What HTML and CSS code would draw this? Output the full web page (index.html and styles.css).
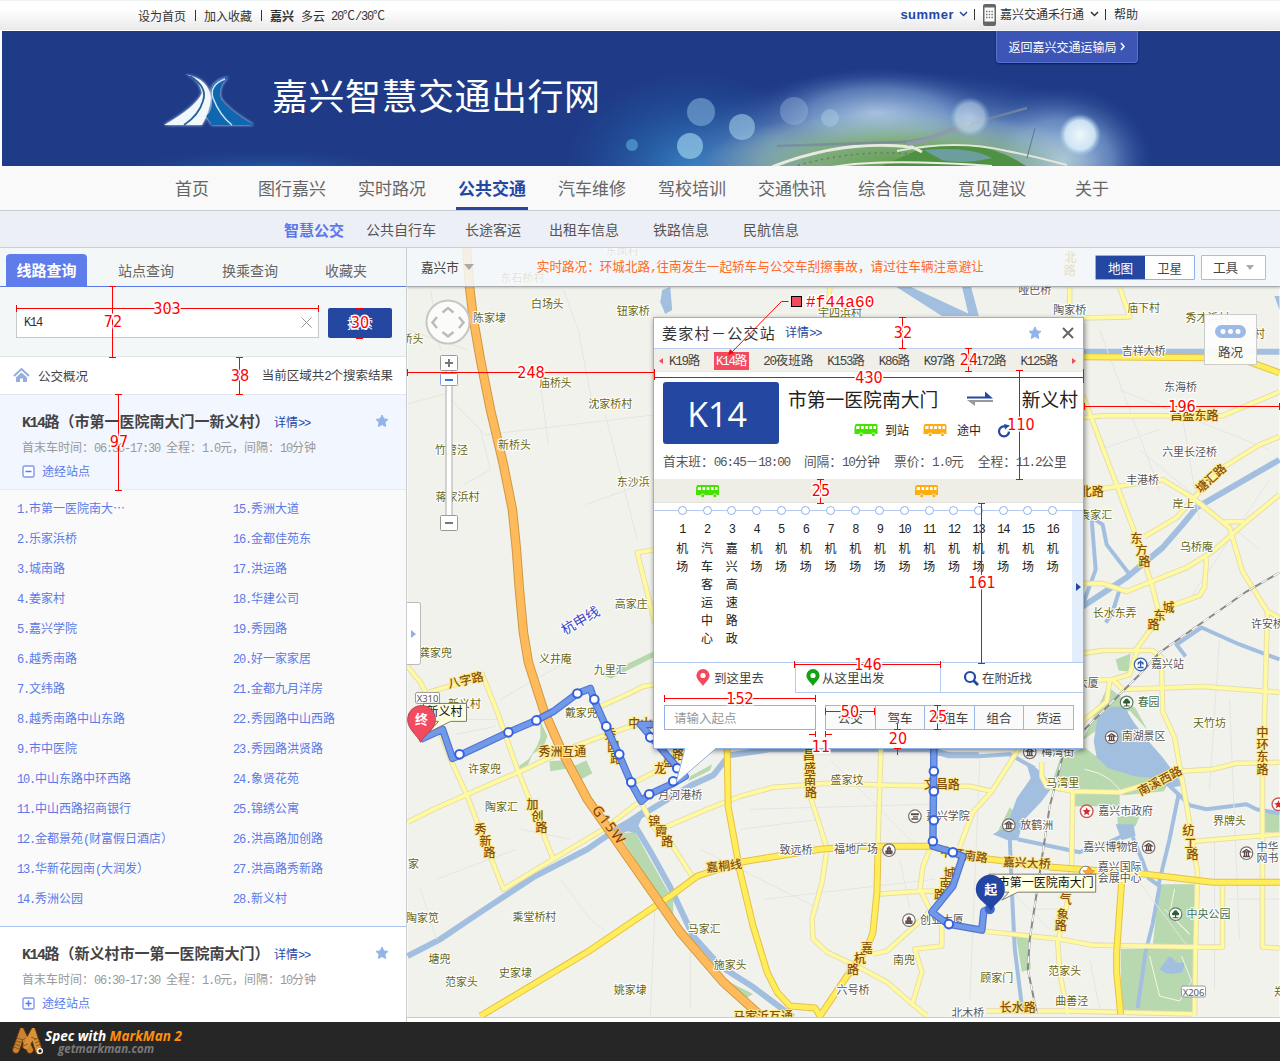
FILE: index.html
```html
<!DOCTYPE html>
<html lang="zh-CN">
<head>
<meta charset="utf-8">
<title>嘉兴智慧交通出行网</title>
<link rel="stylesheet" href="styles.css">
</head>
<body>
<svg class="sprites" width="0" height="0">
  <defs>
    <symbol id="bus" viewBox="0 0 23 14">
      <path fill="currentColor" d="M2 1h19.500q1.500 0 1.500 1.500v8.500h-2a2.200 2.200 0 0 0-4.200 0h-8a2.200 2.200 0 0 0-4.200 0H0V6q0-5 2-5z"/>
      <path fill="#fff" d="M2 3h3v3H1.500zM6.500 3h2.700v3H6.500zM10.700 3h2.700v3h-2.700zM14.900 3h2.700v3h-2.700zM19 3h2.500v3H19z"/>
      <circle fill="currentColor" cx="6.700" cy="11.800" r="1.500"/><circle fill="currentColor" cx="18.900" cy="11.800" r="1.500"/>
    </symbol>
    <symbol id="star" viewBox="0 0 14 14"><path fill="#92b3ea" stroke="#92b3ea" stroke-linejoin="round" d="M7 1l1.800 3.900 4.200.5-3.100 2.900.8 4.200L7 10.500l-3.700 2 .8-4.200L1 5.400l4.200-.5z"/></symbol>
    <symbol id="pin" viewBox="0 0 14 17"><path fill="currentColor" fill-rule="evenodd" d="M7 0a6.600 6.600 0 0 1 6.600 6.600C13.600 10.500 9 14 7 17 5 14 .4 10.500.4 6.600A6.600 6.600 0 0 1 7 0zm0 3.900a2.600 2.600 0 1 0 0 5.200 2.600 2.600 0 0 0 0-5.200z"/></symbol>
    <symbol id="chev" viewBox="0 0 9 6"><path fill="none" stroke="currentColor" stroke-width="1.500" d="M1 1l3.500 3.500L8 1"/></symbol>
    <symbol id="poi" viewBox="-8 -8 16 16"><circle r="6.300" fill="#fff" stroke="#77706c" stroke-width="1.200"/><path fill="none" stroke="#5c4a48" stroke-width="1.300" d="M-3.500 3.300h7M-3.500-1.300h7L0-3.700zM-2-1v4M0-1v4M2-1v4"/></symbol>
    <symbol id="tower" viewBox="-8 -8 16 16"><circle r="6.300" fill="#fff" stroke="#77706c" stroke-width="1.200"/><path fill="none" stroke="#5c4a48" stroke-width="1.300" d="M-3.500 3.300h7M0-4v7M-1.500 3v-5h3v5M-3 3V1h6v2"/></symbol>
    <symbol id="cap" viewBox="-8 -8 16 16"><circle r="6.300" fill="#fff" stroke="#77706c" stroke-width="1.200"/><path fill="#5c4a48" d="M-4-3h8v2h-8zM-2 0h5v1.200h-5zM-3.500 2h7v1.500h-7z"/></symbol>
    <symbol id="tree" viewBox="-8 -8 16 16"><circle r="6.300" fill="#fff" stroke="#5d8060" stroke-width="1.200"/><path fill="#2f5f35" d="M0-4a2.200 2.200 0 0 1 2.200 2A1.700 1.700 0 0 1 3 1H.6v2H3v1h-6V3h2.400V1H-3a1.700 1.700 0 0 1 .8-3A2.200 2.200 0 0 1 0-4z"/></symbol>
    <symbol id="gov" viewBox="-8 -8 16 16"><circle r="6.300" fill="#fff" stroke="#cc5b5b" stroke-width="1.400"/><path fill="#d42c2c" d="M0-4l1.200 2.700 2.900.3-2.200 2 .7 2.900L0 2.400-2.600 3.900l.7-2.900-2.200-2 2.900-.3z"/></symbol>
  </defs>
</svg>

<header class="topbar">
  <div class="topbar-left sim">
    <a>设为首页</a><i class="bar"></i><a>加入收藏</a><i class="bar"></i><b>嘉兴</b><span class="sky">多云</span><span><span class="n">20</span>℃<span class="n">/30</span>℃</span>
  </div>
  <div class="topbar-right sim">
    <b class="user">summer</b><svg class="chev blue"><use href="#chev"/></svg><i class="bar"></i>
    <svg class="phone" viewBox="0 0 13 22"><rect width="13" height="22" rx="2" fill="#666"/><path fill="#fff" d="M1.500 3.500h10v14h-10z"/><path stroke="#777" stroke-width="1.500" stroke-dasharray="1.500 1.200" d="M3 7.500h7M3 10.500h7M3 13.500h7"/></svg>
    <span class="app">嘉兴交通禾行通</span><svg class="chev"><use href="#chev"/></svg><i class="bar"></i><span>帮助</span>
  </div>
</header>

<section class="banner">
  <svg class="scene" viewBox="0 0 1278 135" preserveAspectRatio="none">
    <defs>
      <radialGradient id="glow"><stop offset="0" stop-color="#cfe2f4" stop-opacity=".9"/><stop offset=".55" stop-color="#8fb4dc" stop-opacity=".6"/><stop offset="1" stop-color="#3058a8" stop-opacity="0"/></radialGradient>
      <radialGradient id="teal"><stop offset="0" stop-color="#3c9cd6" stop-opacity=".9"/><stop offset="1" stop-color="#1f5fa8" stop-opacity="0"/></radialGradient>
      <radialGradient id="orb"><stop offset="0" stop-color="#eef8fc"/><stop offset=".7" stop-color="#d6ebf7" stop-opacity=".9"/><stop offset="1" stop-color="#a9cdec" stop-opacity="0"/></radialGradient>
      <radialGradient id="grass"><stop offset="0" stop-color="#5f9c4c"/><stop offset=".45" stop-color="#7fae72" stop-opacity=".85"/><stop offset="1" stop-color="#a9c9c4" stop-opacity="0"/></radialGradient>
    </defs>
    <ellipse cx="265" cy="142" rx="150" ry="22" fill="url(#teal)" opacity=".5"/>
    <ellipse cx="690" cy="140" rx="130" ry="100" fill="url(#teal)" opacity=".85"/>
    <ellipse cx="900" cy="128" rx="250" ry="88" fill="url(#glow)"/>
    <ellipse cx="875" cy="82" rx="120" ry="46" fill="url(#glow)" opacity=".7"/>
    <ellipse cx="1060" cy="130" rx="90" ry="75" fill="url(#glow)" opacity=".9"/>
    <ellipse cx="900" cy="132" rx="200" ry="52" fill="url(#grass)"/>
    <path d="M918 118q60-14 106 17H880z" fill="#4f9143"/><path d="M922 119q45-4 68 8-30 7-50 2z" fill="#6d9e9f"/>
    <g fill="none">
      <path d="M770 136q70-28 140-20l10 5" stroke="#e8e9df" stroke-width="3"/><path d="M790 136q60-18 120-13" stroke="#6a7768" stroke-width="1.500" stroke-dasharray="2 4"/>
      <path d="M775 115l125-4q20 0 50-13l75-21" stroke="#75899f" stroke-width="2.500" opacity=".8"/><path d="M905 113l15-3 48-18" stroke="#8d9bab" stroke-width="4"/>
      <path d="M895 120q60-12 110 0 30 6 60 14" stroke="#e4e6d8" stroke-width="2"/><path d="M830 136q50-9 160-1" stroke="#eceee2" stroke-width="2"/><path d="M1025 127l8-30" stroke="#5d7794"/>
    </g>
    <circle cx="699" cy="81" r="14" fill="#7eadd9" opacity=".6"/><circle cx="740" cy="96" r="13" fill="#a4cde8" opacity=".6"/><circle cx="688" cy="115" r="13" fill="#9fd4ee" opacity=".65"/>
    <circle cx="792" cy="80" r="14" fill="#9eb8dd" opacity=".4"/><circle cx="828" cy="87" r="9" fill="#b3d5e6" opacity=".4"/><circle cx="630" cy="114" r="6" fill="#5297cd" opacity=".8"/>
    <circle cx="968" cy="86" r="20" fill="url(#orb)" opacity=".55"/><circle cx="1078" cy="104" r="21" fill="url(#orb)"/>
  </svg>
  <div class="brand">
    <svg class="logo" viewBox="0 0 92 56">
      <g class="halo"><path fill="#0f67b0" d="M65 4Q44 9 49 25q1 13-6 18l6 9h42Q67 38 58 26q-4-11 7-22z"/>
      <path fill="#f1f8fb" d="M22 1q14 4 17 19Q33 34 1 52h38q8-14 9-27Q46 6 22 1z"/></g>
      <path fill="none" stroke="#27619c" stroke-width="1.800" d="M27 3q18 11 13 25-4 14-19 24"/><path fill="none" stroke="#cbe4f4" stroke-width="1.500" d="M62 6Q46 12 50 25q7 18 19 27"/>
    </svg>
    <h1>嘉兴智慧交通出行网</h1>
  </div>
  <a class="back sim">返回嘉兴交通运输局<svg viewBox="0 0 6 9"><path fill="none" stroke="#fff" stroke-width="1.500" d="M1 1l3 3.500L1 8"/></svg></a>
</section>

<nav class="nav"><a>首页</a><a>图行嘉兴</a><a>实时路况</a><a class="on"><span>公共交通</span></a><a>汽车维修</a><a>驾校培训</a><a>交通快讯</a><a>综合信息</a><a>意见建议</a><a>关于</a></nav>
<nav class="subnav"><a class="on">智慧公交</a><a>公共自行车</a><a>长途客运</a><a>出租车信息</a><a>铁路信息</a><a>民航信息</a></nav>

<main class="main">
  <aside class="side sim">
    <div class="tabs"><a class="on">线路查询</a><a>站点查询</a><a>换乘查询</a><a>收藏夹</a></div>
    <form class="search">
      <div class="field"><span class="n">K14</span><svg viewBox="0 0 11 11"><path stroke="#999" d="M.5.500l10 10M10.500.500l-10 10"/></svg></div>
      <span class="btn">搜索</span>
    </form>
    <div class="summary">
      <svg viewBox="0 0 17 15"><path fill="none" stroke="#92afdf" stroke-width="2" d="M1 8l7.500-7L16 8"/><path fill="#92afdf" d="M8.500 4.500L14 9.500V14h-4v-3.500H7V14H3V9.500z"/></svg>
      <span>公交概况</span><span class="count">当前区域共<span class="n">2</span>个搜索结果</span>
    </div>
    <section class="line open">
      <div class="line-title"><h2><span class="n">K14</span>路（市第一医院南大门一新义村）</h2><a>详情<span class="n">&gt;&gt;</span></a><svg class="star"><use href="#star"/></svg></div>
      <p>首末车时间：<span class="n">06:30-17:30 </span>全程：<span class="n">1.0</span>元，间隔：<span class="n">10</span>分钟</p>
      <div class="via"><svg viewBox="0 0 13 13"><rect x="1" y="1" width="11" height="11" rx="1.500" fill="#fff" stroke="#7f98ee" stroke-width="1.400"/><path stroke="#5b79e8" stroke-width="1.500" d="M3.500 6.500h6"/></svg>途经站点</div>
    </section>
    <div class="stops">
      <ol>
        <li><span class="n">1.</span>市第一医院南大<span class="dots">⋯</span></li><li><span class="n">2.</span>乐家浜桥</li><li><span class="n">3.</span>城南路</li><li><span class="n">4.</span>姜家村</li><li><span class="n">5.</span>嘉兴学院</li><li><span class="n">6.</span>越秀南路</li><li><span class="n">7.</span>文纬路</li><li><span class="n">8.</span>越秀南路中山东路</li><li><span class="n">9.</span>市中医院</li><li><span class="n">10.</span>中山东路中环西路</li><li><span class="n">11.</span>中山西路招商银行</li><li><span class="n">12.</span>金都景苑<span class="n">(</span>财富假日酒店）</li><li><span class="n">13.</span>华新花园南<span class="n">(</span>大润发）</li><li><span class="n">14.</span>秀洲公园</li>
      </ol>
      <ol>
        <li><span class="n">15.</span>秀洲大道</li><li><span class="n">16.</span>金都佳苑东</li><li><span class="n">17.</span>洪运路</li><li><span class="n">18.</span>华建公司</li><li><span class="n">19.</span>秀园路</li><li><span class="n">20.</span>好一家家居</li><li><span class="n">21.</span>金都九月洋房</li><li><span class="n">22.</span>秀园路中山西路</li><li><span class="n">23.</span>秀园路洪贤路</li><li><span class="n">24.</span>象贤花苑</li><li><span class="n">25.</span>锦绣公寓</li><li><span class="n">26.</span>洪高路加创路</li><li><span class="n">27.</span>洪高路秀新路</li><li><span class="n">28.</span>新义村</li>
      </ol>
    </div>
    <section class="line">
      <div class="line-title"><h2><span class="n">K14</span>路（新义村市一第一医院南大门）</h2><a>详情<span class="n">&gt;&gt;</span></a><svg class="star"><use href="#star"/></svg></div>
      <p>首末车时间：<span class="n">06:30-17:30 </span>全程：<span class="n">1.0</span>元，间隔：<span class="n">10</span>分钟</p>
      <div class="via"><svg viewBox="0 0 13 13"><rect x="1" y="1" width="11" height="11" rx="1.500" fill="#fff" stroke="#7f98ee" stroke-width="1.400"/><path stroke="#5b79e8" stroke-width="1.500" d="M3.500 6.500h6M6.500 3.500v6"/></svg>途经站点</div>
    </section>
  </aside>

  <div class="map">
    <svg class="canvas" width="873" height="770" viewBox="407 248 873 770">
      <rect x="407" y="248" width="873" height="770" fill="#f2f2ed"/>
      <g fill="#b8d8b0">
        <path d="M540 722l7 15-4 11-11 7-6 14-12 1 14-10 8-12 4-10zM549 762l15-1 5 8-19 3zM569 769l17-8 6 13-13 7zM618 834l17-1 14 26 24 42v18l-22-34zM603 676l50-24v6l-42 21zM690 777l22-12-2 6-22 11zM723 980l30 15-10 6-20-14z"/>
        <path d="M1060 760l25-12 10 8 25 10 52 14-8 12-40 4-66-4-4-14zM1075 790h45v17h-45zM1118 817h22l-4 10h-18zM1160 885h35v60l-42 2zM1121 950h73v64h-72zM1016 935l13 5 2 30-9 3zM1010 808l8 8-8 18h-13zM1265 813h15v20h-15zM1116 660l15-6-2 18-10-1zM1108 687l28 22 12 22-18-20-22 12-25 18z"/>
      </g>
      <g fill="#a3bfe0">
        <path d="M662 290l8-3 2 23-7 4-5-12zM895 286h14l65 30h-32zM962 286h9l8 30h-10z"/>
        <path d="M1094 742l4-24 14-11 13 1 10 16 14 18 14 16 21 28-10 2-17-9-22-2-26-8-12-11zM1026 762l12 8 16 16-12 16-18 19-6 20h-10l-15-6 14-8 10-28 14-20zM1116 825h18l2 12-14 4z"/>
        <path d="M1160 970l10-13 8 7 8-1-3 10-10 2-8-1zM1275 296h5v14zM615 828l30-20-4 12-6 14-8-2-18 8z"/>
      </g>
      <g fill="none" stroke="#a3bfe0" stroke-linejoin="round">
        <path stroke-width="6" d="M407 957l33-17 43-29 50-33 54-28 32-22 22-12 30-18 20-12 22-10 16-20 40-6h160l20 6h30M632 822l18 30 20 36 23 49 27 30 33 21 40 30M1083 352h197M1280 460l-83 48-14 17-20 23-36 30-44 29"/>
        <path stroke-width="4" d="M1083 512l20 13 4 20 23 30M1092 520l4 50-14 38M1120 590l-8 25-6 8M1186 657l-9-12 25-17 38 17 40 15M930 754l50 3 30-2 25 14M1018 840l62 13 27-9 15-7M1133 838l10 24 6 17 11 8-7 38-7 28-8 56M1179 795l-9 45-11 45M1010 838l2 52 3 60 8 64M1163 780l18 17 9 9 17 4 40-5 10 5 23 4"/>
      </g>
      <g fill="none" stroke="#e4e4e2">
        <path d="M407 404l38-10 35 36 10 40-27 15M455 405l30 30 170-20 112-25M563 290l15 40 15 80M605 415l18 70 14 55M585 505l65-23M540 385l8 60M407 330l60 20M436 880l80-30M420 890l16 50M500 700l70-40M560 880l30 40 15 12M655 900l-5 120M740 830l80-10M765 900l170-20M690 950v60M750 810l180-5M830 760l90 90M900 860l10 50M980 760l-10 240M1090 960l10 50M1100 330l60 160M1120 390l150 60M1180 400l20 120M1140 450l120 100M1220 640l-10 150M1100 450l60-20M1230 700l10 240M1270 480l-80 120M1130 870l60 80M1300 900h-70M1215 840v150M990 870l60 60M1035 890h30M1035 910h30M700 850l120 60M450 720h50M455 735l40-8M520 830l50 10M430 290l10 60"/>
      </g>
      <defs>
        <g id="minor" fill="none" stroke-linejoin="round">
          <path d="M407 823l26-13 34-15 53-23 47-22 26-10 37-13 25-5M427 693l53-15M481 673l16 40 20 57 20 50 16 40M407 667l13 16 5 10 25 67 17 37 16 43 20 50 50-30 50-30 37-28 15 28 15 13 22 34M600 707l27-12 16-8 12-2M630 785l30-15 20-14M655 550l-18 3 18 72"/>
          <path d="M660 830l47-20 33-13 33-9 54-4 66 2 77 1 22 5M807 748l3 49 10 30 7 23-5 33-10 37 1 20 14 13 30 14 30 16 23 20 17 14M877 895l43-3h23M930 850l-7 17-3 23 10 20 12 17v20l-27 3 7 23-9 30M873 955l14-3 33-30 12-12M878 847l3-100M1020 748l-28 44-19 21-13 34"/>
          <path d="M1042 763v14l5 10 26 5 47 1 27-8 33-13 33-2 24-6 43-1M1073 792l-1 75-4 35-10 41 2 30 8 42M983 932l77 8 33 6 100 2h30v-61M1175 738l7 39 8 46 8 50-2 74-1 70M1195 842l85-7M1263 740v208l17 1M987 1012h80l126 3"/>
          <path d="M1120 287l10 30-47 1M1070 287v30M830 286l-3 31M1083 418l20-2h120l57-24M1083 395l34 90 20 53 15 47 8 30M1083 492l80-12 30 18 37 30 13 44 25 40-3 106v22M1145 537l32-19 23-26 23-24 37-23 20-8M1083 584h20l24 8 60-24 26-16 34-30 33-27M1207 558l-2 30-5 8-33 12-32 44M1083 654l20-3h50l9 7 1 54 12 26M1083 681l30-1 10 10 80-3 77 6M1110 682l-3 20-24 20M1137 652l-7 23-17 5M1268 612l12 6M1225 522h20"/>
        </g>
        <g id="major" fill="none" stroke-linejoin="round">
          <path d="M480 1017l107-64 83-56 27-20 43-14 80-13 40-3h73l30 10 27 3 63 8 93 7 67 8h70M727 748l1 59 12 66 13 54 14 46 10 20 13 14 25 2 5 8 27-40 20-27 6-17 4-40 1-43M1122 883l-5 70v20l4 42M1083 357l124 1 43 4 30 11"/>
        </g>
        <path id="highway" fill="none" d="M466 248l3 38 4 34 7 40 10 50 13 55 9 45 4 40 3 40 4 43 5 30 15 47 19 43 25 47 26 37 67 96 43 50 40 36"/>
        <path id="route" fill="none" stroke-linejoin="round" d="M420 740l22-10 10 29 7-3 49-23 28-12 17-9 24-18 13-5 4 12 12 27 13 28 12 28 10 18 8-7 24-11 12-7-8-9-37-43h20M934 748l-1 99 20 6 10 4-10 30-21 26 16 12 34 6 2-19 7-3"/>
      </defs>
      <use href="#minor" stroke="#e3dcb2" stroke-width="5.500"/><use href="#minor" stroke="#fff9a0" stroke-width="3.700"/>
      <use href="#major" stroke="#e5c04a" stroke-width="7"/><use href="#major" stroke="#ffed5a" stroke-width="5"/>
      <use href="#highway" stroke="#cf9840" stroke-width="9.500"/><use href="#highway" stroke="#ffbb5b" stroke-width="7.500"/>
      <g fill="none"><path stroke="#888" stroke-width="2" d="M1280 573l-33 19-87 61-20 22-57 57-20 25-13 50-20 133-2 30 9 44"/><path stroke="#fff" stroke-width="1.300" stroke-dasharray="7 7" d="M1280 573l-33 19-87 61-20 22-57 57-20 25-13 50-20 133-2 30 9 44"/>
      <path stroke="#f5f5e8" d="M1085 770q30 5 40 30M1175 890l-5 25 20 20M1165 910l25 25M1150 957l10 40 20 5 12-20-10-25"/></g>

      <g class="lbl village">
        <text x="547" y="308">白场头</text><text x="633" y="315">钮家桥</text><text x="489" y="322">陈家埭</text><text x="412" y="343">桥头</text><text x="555" y="387">庙桥头</text><text x="610" y="408">沈家桥村</text><text x="514" y="449">新桥头</text><text x="451" y="454">竹管泾</text><text x="457" y="501">蒋家浜村</text><text x="633" y="486">东沙浜</text><text x="631" y="608">高家庄</text><text x="435" y="658">龚家兜</text><text x="555" y="664">义井庵</text><text x="610" y="675">九里汇</text><text x="464" y="709">新义村</text><text x="581" y="718">戴家兜</text><text x="484" y="774">许家兜</text><text x="501" y="812">陶家汇</text><text x="413" y="869">家</text><text x="422" y="923">陶家笕</text><text x="534" y="922">乘堂桥村</text><text x="439" y="964">塘兜</text><text x="461" y="987">范家头</text><text x="515" y="978">史家埭</text><text x="630" y="995">姚家埭</text>
        <text x="847" y="785">盛家坟</text><text x="704" y="934">马家汇</text><text x="730" y="970">施家头</text><text x="904" y="965">南兜</text><text x="1063" y="788">马湾里</text><text x="1230" y="826">界牌头</text><text x="997" y="983">顾家门</text><text x="1065" y="976">范家头</text><text x="1072" y="1006">曲善泾</text><text x="1280" y="997">郑</text><text x="1144" y="312">庙下村</text><text x="1208" y="322">秀才浜村</text><text x="1260" y="338">村</text><text x="1184" y="508">岸上</text><text x="1096" y="519">袁家汇</text><text x="1197" y="551">乌桥庵</text><text x="1115" y="617">长水东弄</text><text x="1210" y="728">天竹坊</text><text x="840" y="317">宇四浜村</text><text x="522" y="282">东石桥村</text><text x="622" y="255">东凤村</text>
      </g>
      <g class="lbl place">
        <text x="680" y="800">月河港桥</text><text x="948" y="821">嘉兴学院</text><text x="796" y="855">致远桥</text><text x="856" y="854">福地广场</text><text x="942" y="925">创业大厦</text><text x="853" y="995">六号桥</text><text x="968" y="1018">北木桥</text><text x="1058" y="757">梅湾街</text><text x="1126" y="816">嘉兴市政府</text><text x="1037" y="830">放鹤洲</text><text x="1111" y="852">嘉兴博物馆</text><text x="1268" y="852">中华</text><text x="1268" y="863">网书</text><text x="1120" y="872">嘉兴国际</text><text x="1120" y="883">会展中心</text><text class="park" x="1209" y="919">中央公园</text><text x="1035" y="294">哑巴桥</text><text x="1070" y="314">陶家桥</text><text x="1144" y="355">吉祥大桥</text><text x="1181" y="391">东海桥</text><text x="1190" y="456">六里长泾桥</text><text x="1143" y="484">丰港桥</text><text x="1268" y="629">许安桥</text><text x="1168" y="669">嘉兴站</text><text x="1088" y="688">大厦</text><text class="park" x="1149" y="707">春园</text><text x="1144" y="741">南湖景区</text>
      </g>
      <g class="lbl road">
        <text x="562" y="757">秀洲互通</text><text x="465" y="685" transform="rotate(-13 465 680)">八字路</text><text x="532 537 541" y="810 822 833">加创路</text><text x="480 485 489" y="835 847 858">秀新路</text><text x="654 661 667" y="827 837 847">锦霞路</text><text x="660 669 678" y="774 767 760">龙盛路</text><text x="640" y="729">中山</text><text x="610 613 616" y="740 752 764">秀园路</text><text x="809 810 810 811" y="761 774 786 798">昌盛南路</text><text x="942" y="790">文昌路</text><text x="724" y="871" transform="rotate(-7 724 867)">嘉桐线</text><text x="964" y="860" transform="rotate(8 964 857)">中环南路</text><text x="950 946 940" y="879 889 900">城南路</text><text x="867 860 853" y="954 964 975">嘉杭路</text><text x="763" y="1022">马家浜互通</text><text x="1160" y="786" transform="rotate(-28 1160 781)">南溪西路</text><text x="1263 1263 1263 1263" y="738 750 762 775">中环东路</text><text x="1189 1191 1193" y="836 849 860">纺工路</text><text x="1027" y="868" transform="rotate(3 1027 864)">嘉兴大桥</text><text x="1066 1063 1061" y="905 920 931">气象路</text><text x="1018" y="1013">长水路</text><text x="1195" y="420">昌盛东路</text><text x="1211" y="483" transform="rotate(-42 1211 478)">塘汇路</text><text x="1092" y="496">北路</text><text x="1137 1142 1145" y="543 555 566">东方路</text><text x="1169 1160 1154" y="612 620 630">城东路</text><text x="1071 1070" y="262 275">北路</text>
      </g>
      <g class="lbl g15"><text transform="translate(591 811) rotate(52)" text-anchor="start" textLength="44">G15W</text></g>
      <text class="lbl water" x="580" y="626" transform="rotate(-30 580 621)">杭申线</text>
      <g class="shield"><rect x="415" y="693" width="24" height="11" rx="1.500"/><rect x="1182" y="987" width="24" height="11" rx="1.500"/><text x="427" y="702.500">X310</text><text x="1194" y="996.500">X206</text></g>
      <use href="#poi" x="1022" y="745" width="16" height="16"/><use href="#poi" x="1001" y="818" width="16" height="16"/><use href="#poi" x="1141" y="840" width="16" height="16"/><use href="#poi" x="1239" y="846" width="16" height="16"/><use href="#poi" x="1104" y="730" width="16" height="16"/><use href="#cap" x="907" y="809" width="16" height="16"/>
      <use href="#tower" x="881" y="843" width="16" height="16"/><use href="#tower" x="901" y="913" width="16" height="16"/>
      <use href="#tree" x="1168" y="907" width="16" height="16"/><use href="#tree" x="1119" y="695" width="16" height="16"/>
      <use href="#gov" x="1079" y="804" width="16" height="16"/><use href="#gov" x="1271" y="797" width="16" height="16"/>
      <circle cx="1141" cy="665" r="6.300" fill="#fff" stroke="#3c63a8" stroke-width="1.300"/><path d="M1138 668h6M1141 661v6M1138.500 665a2.500 2.500 0 1 1 5 0" fill="none" stroke="#2d5ba8" stroke-width="1.400"/>
      <circle cx="1086" cy="873" r="6" fill="#fff" stroke="#777"/><path fill="#ffa42d" stroke="#e07d13" stroke-width=".6" d="M1089 867l1.700 4.200 4.300.3-3.300 2.800 1 4.300-3.700-2.300-3.700 2.300 1-4.300-3.300-2.800 4.300-.3z"/>

      <use href="#route" stroke="#3f69d8" stroke-width="7.500" stroke-opacity=".9"/><use href="#route" stroke="#7298e8" stroke-width="5"/>
      <g fill="#fff" stroke="#3360dc" stroke-width="2"><circle cx="459" cy="755" r="4.300"/><circle cx="508" cy="733" r="4.300"/><circle cx="536" cy="721" r="4.300"/><circle cx="577" cy="694" r="4.300"/><circle cx="594" cy="700" r="4.300"/><circle cx="606" cy="727" r="4.300"/><circle cx="619" cy="755" r="4.300"/><circle cx="631" cy="783" r="4.300"/><circle cx="649" cy="795" r="4.300"/><circle cx="673" cy="782" r="4.300"/><circle cx="677" cy="769" r="4.300"/><circle cx="650" cy="738" r="4.300"/><circle cx="934" cy="772" r="4.300"/><circle cx="934" cy="792" r="4.300"/><circle cx="934" cy="821" r="4.300"/><circle cx="933" cy="842" r="4.300"/><circle cx="953" cy="853" r="4.300"/><circle cx="949" cy="925" r="4.300"/></g>
      <g class="tip"><path d="M423 704h43v18h-16l-22 11 10-11h-15z"/><path d="M989 875h107v18h-78l-16 8 7-8h-20z"/><text x="444" y="717">新义村</text><text x="1046" y="888">市第一医院南大门</text></g>
      <g class="marker"><path fill="#f44a60" stroke="#a33a48" stroke-width=".8" d="M420 743c-3-7-13-13-13-23a14 14 0 0 1 28 0c0 10-12 16-15 23z"/><circle cx="990" cy="910" r="5" fill="#3867cf"/><path fill="#2345a3" d="M991 912c-3-8-15-11-15-22a14.500 14.500 0 0 1 29 0c0 11-11 14-14 22z"/><text x="421" y="725">终</text><text x="991" y="895">起</text></g>
    </svg>

    <div class="toolbar sim">
      <span class="city">嘉兴市</span><i class="tri"></i>
      <span class="notice">实时路况：环城北路<span class="n">,</span>往南发生一起轿车与公交车刮擦事故，请过往车辆注意避让</span>
      <div class="switch"><b>地图</b><span>卫星</span></div>
      <div class="tools">工具<i class="tri"></i></div>
    </div>

    <svg class="pan" viewBox="0 0 46 46"><circle cx="23" cy="23" r="21.500" fill="#fbfbfa" stroke="#c6c6c6" stroke-width="2"/><path fill="none" stroke="#bbb" stroke-width="2.500" d="M17.500 13.500L23 9l5.500 4.500M17.500 33L23 37.500l5.500-4.500M12 18l-4.500 5.500L12 29M34 18l4.500 5.500L34 29"/></svg>
    <svg class="zoom" viewBox="0 0 20 178"><rect x="7" y="10" width="6" height="158" fill="#fff" stroke="#aaa"/><rect x="1.500" y="1.500" width="17" height="15" rx="1" fill="#fff" stroke="#999"/><rect x="1.500" y="19.500" width="17" height="12" rx="1" fill="#fff" stroke="#7c9fe0"/><rect x="1.500" y="161.500" width="17" height="15" rx="1" fill="#fff" stroke="#999"/><path stroke="#777" stroke-width="2" d="M6 9h8M10 5v8M6 169h8"/><path stroke="#3b7be0" stroke-width="2" d="M6 26h8"/></svg>
    <div class="collapse"><i></i></div>
    <div class="traffic sim"><svg viewBox="0 0 31 13"><rect width="31" height="13" rx="6.500" fill="#9db9e8"/><g fill="#fff"><circle cx="8" cy="6.500" r="2.500"/><circle cx="15.500" cy="6.500" r="2.500"/><circle cx="23" cy="6.500" r="2.500"/></g></svg>路况</div>

    <svg class="tail" viewBox="0 0 50 40"><path fill="#fff" d="M13 1L4 37 45 1z"/><path fill="none" stroke="#8fb1e6" d="M13 2.500L4 37 44 2.500"/></svg>
    <article class="popup sim">
      <header><h3>姜家村－公交站</h3><a>详情<span class="n">&gt;&gt;</span></a><svg class="star"><use href="#star"/></svg><svg class="close" viewBox="0 0 12 12"><path stroke="#666" stroke-width="2" d="M1 1l10 10M11 1L1 11"/></svg></header>
      <div class="routes"><i class="prev"></i><a><span class="n">K19</span>路</a><a class="on"><span class="n">K14</span>路</a><a><span class="n">20</span>夜班路</a><a><span class="n">K153</span>路</a><a><span class="n">K86</span>路</a><a><span class="n">K97</span>路</a><a><span class="n">K172</span>路</a><a><span class="n">K125</span>路</a><i class="next"></i></div>
      <div class="info">
        <div class="info-top">
          <div class="badge">K14</div>
          <div class="info-main">
            <div class="ends"><span>市第一医院南大门</span><svg viewBox="0 0 28 16"><path fill="#2447a6" d="M1 5.500h18V.500l8 7H1z"/><path fill="#999" d="M27 9H1l8 6v-4h18z"/></svg><span>新义村</span></div>
            <div class="legend"><svg class="green"><use href="#bus"/></svg><span>到站</span><svg class="amber"><use href="#bus"/></svg><span>途中</span><svg class="refresh" viewBox="0 0 14 14"><path fill="none" stroke="#2447a6" stroke-width="2.200" d="M8 2.500a5 5 0 1 0 4 4.500"/><path fill="#2447a6" d="M7 0l6 1.500-5 4z"/></svg></div>
          </div>
        </div>
        <div class="facts"><span>首末班：<span class="n">06:45</span>－<span class="n">18:00</span></span><span>间隔：<span class="n">10</span>分钟</span><span>票价：<span class="n">1.0</span>元</span><span>全程：<span class="n">11.2</span>公里</span></div>
      </div>
      <div class="track"><svg class="green"><use href="#bus"/></svg><svg class="amber"><use href="#bus"/></svg></div>
      <div class="stations">
        <ul><li><i></i><span class="n">1</span><b>机场</b></li><li><i></i><span class="n">2</span><b>汽车客运中心</b></li><li><i></i><span class="n">3</span><b>嘉兴高速路政</b></li><li><i></i><span class="n">4</span><b>机场</b></li><li><i></i><span class="n">5</span><b>机场</b></li><li><i></i><span class="n">6</span><b>机场</b></li><li><i></i><span class="n">7</span><b>机场</b></li><li><i></i><span class="n">8</span><b>机场</b></li><li><i></i><span class="n">9</span><b>机场</b></li><li><i></i><span class="n">10</span><b>机场</b></li><li><i></i><span class="n">11</span><b>机场</b></li><li><i></i><span class="n">12</span><b>机场</b></li><li><i></i><span class="n">13</span><b>机场</b></li><li><i></i><span class="n">14</span><b>机场</b></li><li><i></i><span class="n">15</span><b>机场</b></li><li><i></i><span class="n">16</span><b>机场</b></li></ul>
        <div class="more"><i></i></div>
      </div>
      <div class="actions"><a><svg class="pin red"><use href="#pin"/></svg>到这里去</a><a class="on"><svg class="pin grn"><use href="#pin"/></svg>从这里出发</a><a class="near"><svg class="lens" viewBox="0 0 16 16"><circle cx="7" cy="7" r="5" fill="none" stroke="#2447a6" stroke-width="2.200"/><path stroke="#2447a6" stroke-width="2.800" d="M10.500 10.500L15 15"/></svg>在附近找</a></div>
      <div class="query"><div class="from">请输入起点</div><div class="modes"><span>公交</span><span>驾车</span><span>出租车</span><span>组合</span><span>货运</span></div></div>
    </article>
  </div>
</main>

<footer class="foot">
  <svg viewBox="0 0 34 28"><g fill="none" stroke-linecap="round"><path stroke="#5c3210" stroke-width="8" d="M5 22L11 5l8 17M15 18l7-13 6 18"/><path stroke="#c98232" stroke-width="6" d="M5 22L11 5l8 17"/><path stroke="#d8923a" stroke-width="6" d="M15 18l7-13 6 18"/></g><path stroke="#8f5417" stroke-width="1" d="M3 19l5 2M4 16l5 2M5 13l6 2M6 10l6 2M14 10l-4 4M17 16l-5 2M20 9l5 2M23 12l4-2M24 15l5-2M25 18l5-2"/><circle cx="29" cy="23" r="3" fill="#fff"/><circle cx="29" cy="23" r="1.700" fill="#222"/></svg>
  <div><p class="spec">Spec with <em>MarkMan 2</em></p><p class="site">getmarkman.com</p></div>
</footer>

<svg class="marks" width="1280" height="1061" viewBox="0 0 1280 1061">
  <g fill="none" stroke="#f00" shape-rendering="crispEdges">
    <path d="M16.500 308.500h302M16.500 305v7M318.500 305v7M112.500 287v70M109 286.500h7M109 357.500h7M359.500 308v30M356 308.500h7M356 338.500h7M239.500 357v38M236 357.500h7M236 394.500h7M118.500 394v96M115 394.500h7M115 490.500h7"/>
    <path d="M407.500 372.500h246M407.500 369v7M654.500 369v11M654.500 377.500h429M1083.500 369v14M902.500 317v32M899 317.500h7M899 348.500h7M968.500 348v24M965 348.500h7M965 371.500h7"/>
    <path d="M1019.500 371v108M1016 370.500h7M1016 479.500h7M820.500 479v25M817 479.500h7M817 503.500h7M981.500 503v160M978 503.500h7M978 663.500h7M1084.500 406.500h195M1084.500 403v7M1279.500 403v7"/>
    <path d="M794.500 664.500h146M794.500 661v7M940.500 661v7M664.500 698.500h151M664.500 695v7M815.500 695v7M825.500 711.500h49M825.500 708v7M874.500 708v7M937.500 705v24M934 705.500h7M934 729.500h7M897.500 724v6M894 729.500h7M897.500 748v7M894 748.500h7M815.500 731v6M809 734.500h6M825.500 731v6M825 734.500h7"/>
  </g>
  <path fill="none" stroke="#f00" d="M788.500 301.500h-7L731 353"/><path fill="#f00" d="M728 355l2-6 4 4z"/><rect x="791.500" y="296.500" width="10" height="10" fill="#f44a60" stroke="#000"/>
  <text class="hex" x="806" y="307">#f44a60</text>
  <g class="num"><text x="167" y="314">303</text><text x="113" y="327">72</text><text x="360" y="328">30</text><text x="240" y="381">38</text><text x="119" y="447">97</text><text x="531" y="378">248</text><text x="869" y="383">430</text><text x="903" y="338">32</text><text x="969" y="365">24</text><text x="1021" y="430">110</text><text x="821" y="496">25</text><text x="982" y="588">161</text><text x="1182" y="412">196</text><text x="868" y="670">146</text><text x="740" y="704">152</text><text x="850" y="717">50</text><text x="938" y="722">25</text><text x="898" y="744">20</text><text x="821" y="752">11</text></g>
</svg>
</body>
</html>
```
FILE: styles.css
```css
* { box-sizing: border-box; }
body { margin: 0; width: 1280px; height: 1061px; overflow: hidden; position: relative; background: #fff; color: #444; font: 12px/18px "Noto Sans CJK SC", sans-serif; display: flex; flex-direction: column; }
h1, h2, h3, p, ol, ul { margin: 0; padding: 0; font-weight: 400; list-style: none; }
i { font-style: normal; }
.sprites { position: absolute; }
.sim { font-family: "Noto Sans CJK SC", sans-serif; font-size: 12px; }
/* half-width figures, so that two of them fill one ideograph */
.n { font-family: "Liberation Mono", monospace; letter-spacing: -.1em; white-space: pre; }
.star { width: 14px; height: 14px; }
.green { color: #45e100; }
.amber { color: #ffad0a; }

.topbar { height: 31px; flex: none; display: flex; justify-content: space-between; padding: 0 141px 0 138px; border-top: 1px solid #edf4f2; background: linear-gradient(#fdfdfd, #fff 30%, #e9e9e9); border-bottom: 1px solid #fff; color: #333; }
.topbar-left, .topbar-right { display: flex; align-items: center; }
.bar { width: 1px; height: 11px; background: #333; margin: 0 8px 0 9px; }
.sky { margin: 0 6px 0 7px; }
.topbar-right { padding: 0 1px 3px 0; }
.topbar-right .bar { margin: 0 8px 0 6px; }
.user { font: bold 13px "Liberation Sans", sans-serif; color: #2447a6; letter-spacing: .5px; margin-right: 5px; }
.chev { width: 9px; height: 6px; }
.chev.blue { color: #2447a6; }
.phone { width: 13px; height: 22px; margin-right: 4px; position: relative; top: 1px; }
.app { margin-right: 6px; }

.banner { height: 135px; flex: none; margin-left: 2px; background: #1f3b87; position: relative; display: flex; align-items: flex-start; }
.scene { position: absolute; left: 0; top: 0; width: 1278px; height: 135px; }
.brand { position: relative; display: flex; align-items: flex-start; gap: 18px; padding: 37px 0 0 161px; }
.logo { width: 92px; height: 56px; margin-top: 5px; }
.halo { filter: drop-shadow(0 0 1.500px #dceaff); }
.brand h1 { color: #fff; font-size: 36px; line-height: 54px; letter-spacing: .5px; font-weight: 400; margin-top: -1px; margin-left: -1px; }
.back { position: relative; margin: 0 142px 0 auto; width: 142px; height: 32px; border: 1px solid #5873cf; border-top: 0; border-radius: 0 0 4px 4px; background: #3d56b5; box-shadow: 0 1px 2px #0b1a4c; color: #fff; display: flex; align-items: center; justify-content: center; gap: 3px; }
.back svg { width: 6px; height: 9px; }

.nav { height: 45px; flex: none; display: flex; padding-left: 142px; background: #f9f9f9; border-bottom: 1px solid #c9ccd3; color: #666; font-size: 17px; line-height: 44px; }
.nav a { width: 100px; text-align: center; }
.nav .on { color: #2447a6; font-weight: 700; }
.nav .on span { display: inline-block; width: 72px; height: 44px; border-bottom: 3px solid #2447a6; }
.subnav { height: 37px; flex: none; display: flex; padding-left: 284px; background: #edeff6; border-bottom: 1px solid #cbced5; color: #555; font-size: 14px; line-height: 37px; }
.subnav a { margin-right: 34px; }
.subnav .on { color: #5b79e8; font-weight: 700; font-size: 15px; margin-right: 22px; }
.subnav a:nth-child(2) { margin-right: 29px; }
.subnav a:nth-child(3) { margin-right: 28px; }

.main { flex: 1; display: flex; min-height: 0; }
.side { width: 407px; flex: none; border-right: 1px solid #c9ccd0; background: #fff; display: flex; flex-direction: column; overflow: hidden; }
.tabs { height: 39px; flex: none; display: flex; align-items: flex-end; background: #f3f7f7; border-bottom: 1px solid #5b79e8; padding-left: 6px; font-size: 14px; line-height: 32px; color: #666; }
.tabs a { width: 104px; text-align: center; }
.tabs .on { width: 81px; background: #5f7ceb; color: #fff; font-weight: 700; font-size: 15px; border-radius: 4px 4px 0 0; margin-right: 7px; }
.tabs a:last-child { width: 88px; }
.search { height: 70px; flex: none; display: flex; align-items: center; gap: 9px; padding: 2px 0 0 16px; background: #f3f7f7; border-bottom: 1px solid #e2e8ea; }
.field { width: 303px; height: 30px; border: 1px solid #c6c8ca; background: #fff; display: flex; align-items: center; justify-content: space-between; padding: 0 6px 0 7px; color: #333; }
.field svg { width: 11px; height: 11px; }
.btn { width: 64px; height: 30px; border-radius: 2px; background: #2447a1; color: #fff; text-align: center; font-size: 13px; line-height: 30px; }
.summary { height: 38px; flex: none; display: flex; align-items: center; padding: 0 13px; border-bottom: 1px solid #e0e8ee; font-size: 12.500px; }
.summary svg { width: 17px; height: 15px; margin-right: 8px; }
.count { margin-left: auto; }
.line { height: 96px; flex: none; padding: 16px 17px 0 22px; }
.line.open { height: 95px; background: #f2f6fe; border-bottom: 1px solid #e6ecf2; }
.line-title { display: flex; align-items: center; height: 23px; }
.line-title h2 { width: 252px; font-size: 15px; font-weight: 700; white-space: nowrap; }
.line-title a, .popup header a { color: #2447a6; white-space: nowrap; }
.line-title .star { margin: -4px 0 0 auto; }
.line p { color: #999; line-height: 26px; height: 27px; }
.via { display: flex; align-items: center; gap: 7px; height: 20px; color: #5b79e8; }
.via svg { width: 13px; height: 13px; }
.stops { height: 437px; flex: none; display: flex; padding: 3px 0 0 17px; background: #fafafa; border-bottom: 1px solid #abc3f0; color: #5b79e8; line-height: 30px; }
.stops ol { width: 216px; flex: none; }
.stops ol + ol { width: 170px; }
.stops li { height: 30px; }

.map { flex: 1; position: relative; overflow: hidden; background: #fff; }
.canvas { display: block; border-bottom: 1px solid #ccc; height: 770px; }
.lbl { font-size: 11px; text-anchor: middle; paint-order: stroke; stroke: #fff; stroke-width: 2px; stroke-linejoin: round; }
.village { fill: #666610; }
.place { fill: #555; }
.park { fill: #47714a; }
.road { fill: #84500c; stroke: #ffeb8c; font-size: 12px; font-weight: 500; }
.g15 { fill: #74430a; stroke: #ffbb5b; font: 14px "Noto Sans", sans-serif; }
.water { fill: #3b45cc; font-size: 14px; }
.shield rect { fill: #fff; stroke: #999; }
.shield text { font: 9.500px "Noto Sans", sans-serif; text-anchor: middle; fill: #555; }
.tip path { fill: #ffffe1; stroke: #777; }
.tip text { font-size: 12px; fill: #111; text-anchor: middle; }
.marker text { font-size: 13px; font-weight: 700; fill: #fff; text-anchor: middle; }

.toolbar { position: absolute; left: 0; top: 0; width: 873px; height: 39px; display: flex; align-items: center; padding: 0 14px; background: rgba(244, 248, 250, .86); border-bottom: 1px solid #a9abad; box-shadow: 0 1px 2px rgba(0, 0, 0, .2); font-size: 12.600px; }
.tri { border: 5px solid transparent; border-top: 6px solid #aaa; border-bottom: 0; }
.city { margin-right: 5px; }
.notice { margin-left: 63px; color: #ff6a2a; white-space: nowrap; }
.switch { display: flex; margin-left: auto; margin-right: 6px; width: 100px; height: 25px; border: 1px solid #8fb0e8; border-radius: 1px; background: #fff; line-height: 23px; text-align: center; }
.switch > * { flex: 1; font-weight: 400; }
.switch b { background: #2447a1; color: #fff; }
.tools { display: flex; align-items: center; justify-content: center; gap: 8px; width: 65px; height: 25px; border: 1px solid #a5bfe8; border-radius: 1px; background: #fff; }
.tools .tri { border-width: 5px 4px 0; }
.pan { position: absolute; left: 18px; top: 51px; width: 46px; height: 46px; }
.zoom { position: absolute; left: 32px; top: 106px; width: 20px; height: 178px; }
.collapse { position: absolute; left: 0; top: 354px; width: 14px; height: 63px; background: #fff; border: 1px solid #bbb; border-left: 0; border-radius: 0 3px 3px 0; display: flex; align-items: center; justify-content: center; }
.collapse i { border: 4px solid transparent; border-left: 5px solid #8fb1e0; border-right: 0; }
.traffic { position: absolute; left: 797px; top: 66px; width: 53px; height: 51px; border: 1px solid #ccc; background: rgba(253, 253, 252, .93); display: flex; flex-direction: column; align-items: center; padding-top: 10px; gap: 5px; font-size: 12.500px; }
.traffic svg { width: 31px; height: 13px; flex: none; }
.tail { position: absolute; left: 265px; top: 498px; width: 50px; height: 40px; z-index: 2; }
.popup { position: absolute; left: 246px; top: 69px; width: 431px; height: 432px; background: #fff; border: 1px solid #8fb1e6; box-shadow: 1px 2px 5px rgba(0, 0, 0, .45); display: flex; flex-direction: column; }
.popup > * { flex: none; }
.popup header { height: 31px; display: flex; align-items: center; padding: 0 9px 0 8px; border-bottom: 1px solid #b9cef0; }
.popup h3 { font-size: 15px; letter-spacing: 1.300px; margin-right: 9px; color: #333; }
.popup header .star { margin-left: auto; margin-right: 20px; }
.close { width: 12px; height: 12px; }
.routes { height: 23px; background: #f0efe8; display: flex; align-items: center; justify-content: space-between; padding: 0 7px 0 5px; white-space: nowrap; font-size: 12.500px; }
.routes .on { background: #f44a60; color: #fff; padding: 0 2px; line-height: 16px; }
.prev, .next { border: 3px solid transparent; border-right: 4px solid #f44a60; border-left: 0; }
.prev { margin-right: -8px; }
.next { border-right: 0; border-left: 4px solid #f44a60; }
.info { height: 107px; padding: 10px 5px 0 9px; box-shadow: 0 1px 2px #aaa; }
.info-top { display: flex; gap: 9px; }
.badge { width: 116px; height: 62px; border-radius: 3px; background: #2447a1; color: #fff; font: 500 34px/64px "Open Sans", sans-serif; text-align: center; padding-right: 8px; }
.info-main { flex: 1; }
.ends { display: flex; align-items: center; justify-content: space-between; font-size: 18.800px; line-height: 34px; color: #222; white-space: nowrap; }
.ends svg { width: 28px; height: 16px; }
.legend { display: flex; align-items: center; padding: 4px 0 0 66px; color: #222; line-height: 20px; }
.legend svg { width: 24px; height: 14px; margin-right: 7px; }
.legend span { margin-right: 14px; }
.legend .amber { margin: 0 10px 0 0; }
.legend .refresh { width: 14px; margin: 2px 0 0 2px; }
.facts { display: flex; gap: 14px; font-size: 12.700px; line-height: 34px; color: #555; white-space: nowrap; }
.track { height: 24px; background: #eeede6; display: flex; align-items: center; padding-left: 42px; border-bottom: 1px solid #e2e2dc; }
.track svg { width: 23px; height: 14px; }
.track .amber { margin-left: 196px; }
.stations { height: 160px; display: flex; border-bottom: 1px solid #b4cbf0; background: linear-gradient(#b4cbf0, #b4cbf0) 0 7px / 100% 1px no-repeat; }
.stations ul { width: 395px; margin-left: 16px; display: flex; color: #222; }
.stations li { flex: 1; display: flex; flex-direction: column; align-items: center; padding-top: 3px; line-height: 18px; }
.stations li i { width: 9px; height: 9px; border: 1px solid #8fb1e6; border-radius: 50%; background: #fff; margin-bottom: 6px; flex: none; }
.stations b { font-weight: 400; width: 12px; }
.more { margin: 8px 0 0 auto; width: 11px; background: #e3eefd; display: flex; align-items: center; }
.more i { margin-left: 4px; border: 4px solid transparent; border-left: 5px solid #2447a1; border-right: 0; }
.actions { height: 30px; display: grid; grid-template-columns: 141px 146px 1fr; font-size: 12.500px; }
.actions a { display: flex; align-items: center; justify-content: center; gap: 4px; padding-left: 11px; border-bottom: 1px solid #b4cbf0; }
.actions a:first-child { border-color: transparent; }
.actions .on { justify-content: flex-start; gap: 2px; padding-left: 10px; border: 1px solid #b4cbf0; border-top: 0; }
.actions .near { justify-content: flex-start; gap: 3px; padding-left: 22px; }
.pin { width: 14px; height: 17px; }
.red { color: #f44a60; }
.grn { color: #12a312; }
.lens { width: 16px; height: 16px; }
.query { display: flex; align-items: center; gap: 9px; padding: 11px 0 0 10px; }
.from { width: 152px; height: 25px; border: 1px solid #8fb1e6; color: #999; padding-left: 9px; line-height: 23px; font-size: 12.500px; }
.modes { width: 249px; height: 25px; border: 1px solid #9ab6e6; display: flex; line-height: 23px; text-align: center; background: #fafafa; margin-top: 1px; font-size: 12.500px; }
.modes span { flex: 1; }
.modes span + span { border-left: 1px solid #9ab6e6; }

.foot { position: relative; height: 39px; flex: none; background: #262626; display: flex; padding: 6px 0 0 11px; font-family: "Open Sans", "Noto Sans", sans-serif; font-style: italic; }
.foot svg { width: 34px; height: 28px; }
.foot p { font-weight: 700; white-space: nowrap; }
.spec { color: #fff; font-size: 13.500px; line-height: 16px; }
.spec em { color: #ff8f0c; }
.site { color: #7a7a7a; font-size: 11.500px; line-height: 10px; padding-left: 13px; }
.marks { position: absolute; left: 0; top: 0; pointer-events: none; z-index: 5; }
.num { font: 16px "DejaVu Sans Condensed", "DejaVu Sans", sans-serif; text-anchor: middle; fill: #f00; paint-order: stroke; stroke: #fff; stroke-width: 3px; }
.hex { font: 16px "Liberation Mono", monospace; fill: #f00; paint-order: stroke; stroke: #fff; stroke-width: 3px; letter-spacing: .2px; }
```
